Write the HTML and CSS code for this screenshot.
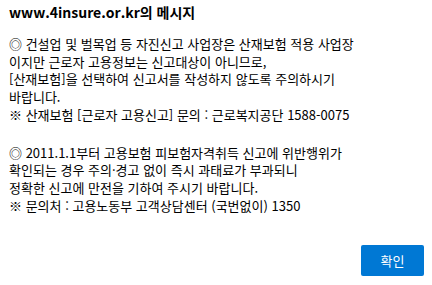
FILE: index.html
```html
<!DOCTYPE html>
<html lang="ko">
<head>
<meta charset="utf-8">
<link rel="stylesheet" href="styles.css">
</head>
<body>
<div class="dialog">
  <h1 class="title">www.4insure.or.kr의 메시지</h1>
  <div class="message">
    <p>◎ 건설업 및 벌목업 등 자진신고 사업장은 산재보험 적용 사업장<br>이지만 근로자 고용정보는 신고대상이 아니므로,<br>[산재보험]을 선택하여 신고서를 작성하지 않도록 주의하시기<br>바랍니다.<br>※ 산재보험 [근로자 고용신고] 문의 : 근로복지공단 1588-0075</p>
    <p>◎ 2011.1.1부터 고용보험 피보험자격취득 신고에 위반행위가<br>확인되는 경우 주의·경고 없이 즉시 과태료가 부과되니<br>정확한 신고에 만전을 기하여 주시기 바랍니다.<br>※ 문의처 : 고용노동부 고객상담센터 (국번없이) 1350</p>
  </div>
  <div class="actions">
    <button class="ok">확인</button>
  </div>
</div>
</body>
</html>
```

FILE: styles.css
```css
html, body {
  margin: 0;
  padding: 0;
  background: #ffffff;
}
body {
  font-family: "Noto Sans CJK KR", "Open Sans", sans-serif;
  color: #000000;
}
.dialog {
  width: 432px;
  height: 285px;
  box-sizing: border-box;
  padding: 2px 8px 9px 9px;
  display: flex;
  flex-direction: column;
}
.title {
  margin: 0;
  font-size: 14px;
  font-weight: 700;
  line-height: 20px;
  height: 20px;
}
.message {
  margin-top: 13px;
  font-size: 13px;
  line-height: 17.7px;
}
.message p {
  margin: 0 0 20px 0;
}
.message p:last-child {
  margin-bottom: 0;
}
.actions {
  margin-top: auto;
  display: flex;
  justify-content: flex-end;
}
.ok {
  width: 63px;
  height: 31px;
  border: none;
  border-radius: 2px;
  background: #0078d4;
  color: #ffffff;
  font-family: "Noto Sans CJK KR", sans-serif;
  font-size: 13px;
  padding: 0;
}
```
